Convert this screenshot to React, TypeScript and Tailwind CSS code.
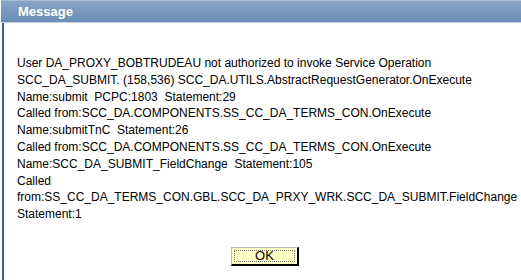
export default function App() {
  const lines = [
    "User DA_PROXY_BOBTRUDEAU not authorized to invoke Service Operation",
    "SCC_DA_SUBMIT. (158,536) SCC_DA.UTILS.AbstractRequestGenerator.OnExecute",
    "Name:submit\u00a0 PCPC:1803\u00a0 Statement:29",
    "Called from:SCC_DA.COMPONENTS.SS_CC_DA_TERMS_CON.OnExecute",
    "Name:submitTnC\u00a0 Statement:26",
    "Called from:SCC_DA.COMPONENTS.SS_CC_DA_TERMS_CON.OnExecute",
    "Name:SCC_DA_SUBMIT_FieldChange\u00a0 Statement:105",
    "Called",
    "from:SS_CC_DA_TERMS_CON.GBL.SCC_DA_PRXY_WRK.SCC_DA_SUBMIT.FieldChange",
    "Statement:1",
  ];
  return (
    <div className="w-[521px] h-[280px] bg-white overflow-hidden flex flex-col" style={{ fontFamily: '"Liberation Sans", Arial, sans-serif' }}>
      <div className="ml-[1px] h-[22px] bg-gradient-to-b from-[#87a4c5] to-[#6b8eb6] border-t border-[#a9bdd3] flex items-center pl-[17px]">
        <span className="text-white font-bold text-[13px] leading-none">Message</span>
      </div>
      <div className="h-px bg-[#c3d3e6] ml-[1px]"></div>
      <div className="flex-1 ml-[2px] border-l-2 border-[#3d5f88] pl-[13px] pt-[32px]">
        <div className="text-[12px] leading-[16.8px] text-black">
          {lines.map((l, i) => (
            <div key={i} className="whitespace-pre">{l}</div>
          ))}
        </div>
        <div className="flex justify-center mt-[24px] pr-[8px]">
          <div className="w-[68px] h-[19px] border border-t-[#bbb] border-l-[#bbb] border-r-black border-b-black border-r-2 border-b-2 bg-[#ffffc4] p-[2px]">
            <div className="w-full h-full border border-dotted border-[#777] flex items-center justify-center text-[13px] leading-none text-black">
              OK
            </div>
          </div>
        </div>
      </div>
    </div>
  );
}
